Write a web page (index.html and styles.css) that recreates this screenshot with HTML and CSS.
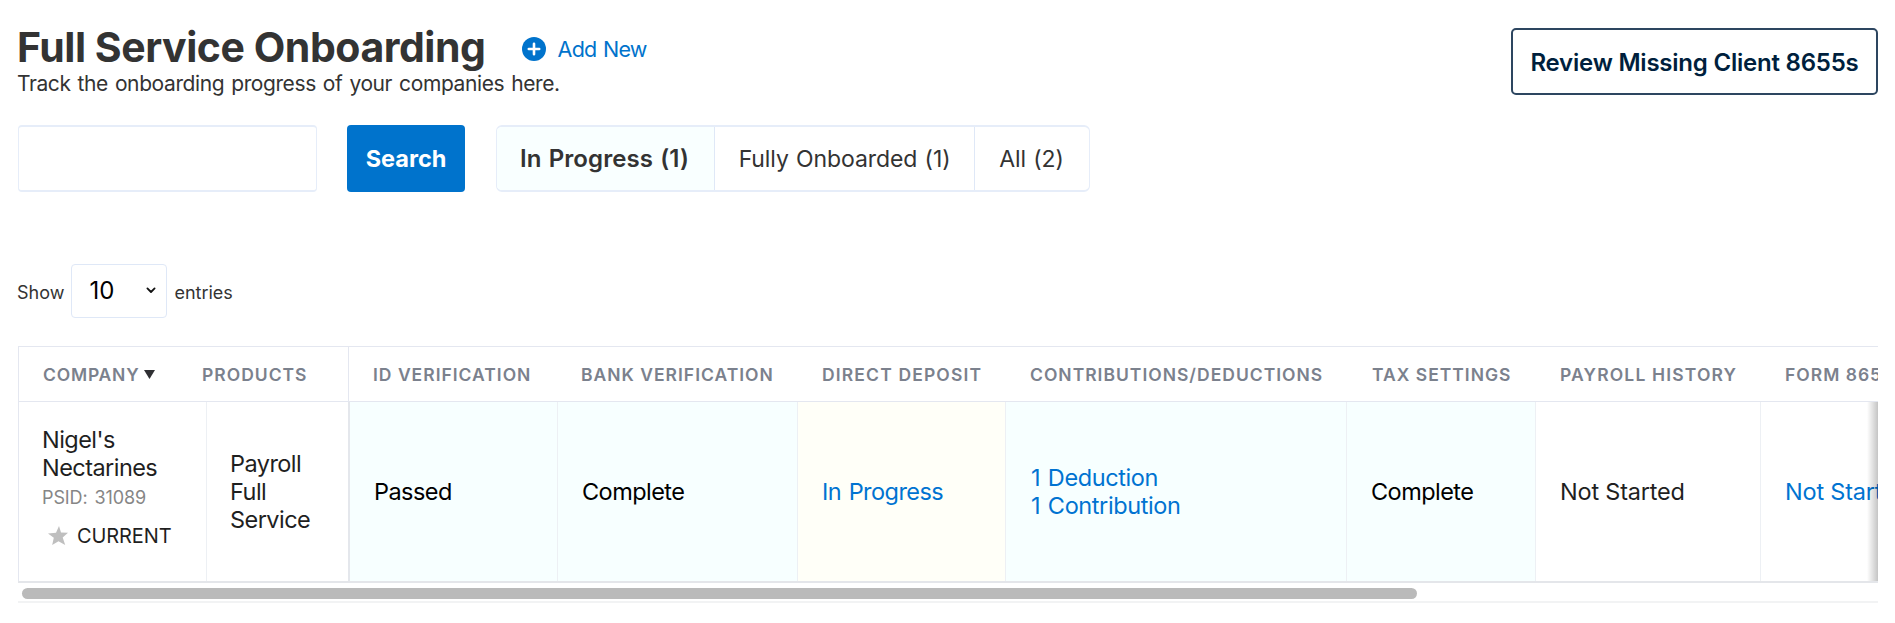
FILE: index.html
```html
<!DOCTYPE html>
<html lang="en">
<head>
<meta charset="utf-8">
<title>Full Service Onboarding</title>
<link rel="stylesheet" href="styles.css">
</head>
<body>
<main class="page">
  <header class="header">
    <div>
      <div class="title-row">
        <h1 class="title">Full Service Onboarding</h1>
        <a class="add-new">
          <svg class="add-icon" viewBox="0 0 24 24"><circle cx="12" cy="12" r="12" fill="#0073cc"/><path d="M12 6.800v10.400M6.800 12h10.400" stroke="#fff" stroke-width="2.600" stroke-linecap="round"/></svg>
          <span>Add New</span>
        </a>
      </div>
      <p class="subtitle">Track the onboarding progress of your companies here.</p>
    </div>
    <button class="review">Review Missing Client 8655s</button>
  </header>

  <div class="controls">
    <input class="search-input" type="text">
    <button class="search-btn">Search</button>
    <div class="tabs">
      <button class="tab tab-active">In Progress (1)</button>
      <button class="tab">Fully Onboarded (1)</button>
      <button class="tab">All (2)</button>
    </div>
  </div>

  <div class="length">
    <span>Show</span>
    <div class="select"><span>10</span><svg class="chevron" viewBox="0 0 10 7"><path d="M1.4 1.4L5 5l3.600-3.600" fill="none" stroke="#111" stroke-width="1.8" stroke-linecap="round" stroke-linejoin="round"/></svg></div>
    <span>entries</span>
  </div>

  <section class="grid">
    <div class="row head">
      <div class="th th-company">Company<svg class="sort" viewBox="0 0 11 9"><path d="M0 0h11L5.500 9z" fill="#2f3033"/></svg></div>
      <div class="th th-products">Products</div>
      <div class="th">ID Verification</div>
      <div class="th">Bank Verification</div>
      <div class="th th-wide">Direct Deposit</div>
      <div class="th">Contributions/Deductions</div>
      <div class="th">Tax Settings</div>
      <div class="th th-wide">Payroll History</div>
      <div class="th">Form 8655</div>
    </div>
    <div class="row body">
      <div class="td company">
        <span class="name">Nigel's<br>Nectarines</span>
        <span class="psid">PSID: 31089</span>
        <span class="current"><svg class="star" viewBox="0 0 20 19"><path d="M11 0l2 6.500 7 .3-5.300 4.600L17.200 19 10.500 15.200 4.200 19l1.600-7.300L0 7.600l8-.8z" fill="#bfbfbf"/></svg>CURRENT</span>
      </div>
      <div class="td products">Payroll<br>Full<br>Service</div>
      <div class="td done">Passed</div>
      <div class="td done">Complete</div>
      <div class="td progress"><a class="link">In Progress</a></div>
      <div class="td done contrib"><a class="link">1 Deduction<br>1 Contribution</a></div>
      <div class="td done">Complete</div>
      <div class="td todo">Not Started</div>
      <div class="td todo last"><a class="link">Not Started</a></div>
    </div>
    <div class="track"><div class="thumb"></div></div>
  </section>
</main>
</body>
</html>
```
FILE: styles.css
```css
* { box-sizing: border-box; }

body {
  margin: 0;
  background: #fff;
  color: #333;
  font-family: Inter, "Liberation Sans", sans-serif;
  font-size: 23px;
  line-height: 28px;
}

button { font: inherit; color: inherit; background: none; border: 0; padding: 0; }

.page { padding: 24px 17px 0 18px; }

.header { display: flex; justify-content: space-between; align-items: flex-start; height: 73px; }
.title-row { display: flex; align-items: center; height: 45px; }
.title { margin: 0 0 0 -1px; font-size: 41px; font-weight: 700; line-height: 46px; letter-spacing: -0.46px; }
.add-new { display: flex; align-items: center; margin: 4px 0 0 36px; gap: 12px; font-size: 21.5px; letter-spacing: -0.7px; word-spacing: 1px; color: #0073cc; }
.add-icon { width: 24px; height: 24px; margin-top: 1px; }
.subtitle { margin: 0 0 0 -1px; font-size: 21px; letter-spacing: -0.4px; word-spacing: 1.5px; line-height: 29px; }

.review {
  width: 367px;
  height: 67px;
  margin-top: 4px;
  padding-top: 2px;
  border: 2px solid #2d4660;
  border-radius: 5px;
  color: #001f3d;
  font-size: 24px;
  font-weight: 600;
  letter-spacing: -0.22px;
  white-space: nowrap;
}

.controls { display: flex; height: 67px; margin-top: 28px; }
.search-input { width: 299px; border: 2px solid #e6edf9; border-width: 2px 1px; border-radius: 4px; padding: 0 16px; }
.search-btn {
  width: 118px;
  margin-left: 30px;
  padding-top: 1px;
  border-radius: 4px;
  background: #0073cc;
  color: #fff;
  font-size: 23.5px;
  font-weight: 700;
}
.tabs { display: flex; width: 594px; margin-left: 31px; border: 2px solid #e6edf9; border-width: 2px 1px; border-radius: 6px; overflow: hidden; }
.tab { padding: 0 0 0 24px; text-align: left; letter-spacing: -0.1px; word-spacing: 1px; border-left: 1px solid #dfe8f7; width: 261px; white-space: nowrap; }
.tab:last-child { width: 115px; }
.tab-active { width: 217px; border-left: 0; font-weight: 600; font-size: 24px; letter-spacing: 0.1px; padding-left: 23px; background: #f9ffff; }

.length { display: flex; align-items: center; height: 54px; margin-top: 72px; font-size: 18px; }
.length > span { padding-top: 4px; margin-left: -1px; }
.select {
  display: flex;
  justify-content: space-between;
  align-items: center;
  width: 96px;
  height: 54px;
  margin: 0 8px 0 7px;
  padding: 0 10px 0 17px;
  border: 1px solid #dfe8f7;
  border-radius: 4px;
  font-size: 24px;
  color: #000;
}
.chevron { width: 10px; height: 7px; margin-bottom: 2px; }

.grid { margin-top: 28px; height: 257px; overflow: hidden; border-top: 1px solid #e4e7f0; }
.row { display: grid; width: 1900px; }
.head {
  grid-template-columns: 160px 171px 208px 241px 208px 342px 188px 225px 157px;
  height: 55px;
  border-bottom: 1px solid #e4e7f0;
}
.th {
  display: flex;
  align-items: center;
  padding: 1px 0 0 24px;
  font-size: 17.5px;
  font-weight: 600;
  letter-spacing: 1px;
  text-transform: uppercase;
  white-space: nowrap;
  color: #7b818d;
}
.th-company { border-left: 1px solid #e4e7f0; letter-spacing: 0.8px; }
.th-products { border-right: 1px solid #e4e7f0; }
.th-wide { letter-spacing: 1.15px; }
.sort { width: 11px; height: 9px; margin-left: 5px; }

.body {
  grid-template-columns: 189px 143px 208px 240px 208px 341px 189px 225px 157px;
  height: 181px;
  border-bottom: 2px solid #e4e6ea;
}
.td {
  display: flex;
  align-items: center;
  padding-left: 24px;
  border-right: 1px solid #edf0f4;
  font-size: 23.5px;
  letter-spacing: -0.55px;
  word-spacing: 1.5px;
  white-space: nowrap;
  color: #1f1f1f;
}
.company { flex-direction: column; align-items: flex-start; padding: 24px 0 0 23px; border-left: 1px solid #e4e7f0; }
.psid { font-size: 18px; line-height: 32px; letter-spacing: -0.1px; word-spacing: 2px; color: #868686; }
.current { display: flex; align-items: center; height: 44px; font-size: 20px; letter-spacing: -0.1px; }
.star { width: 20px; height: 19px; margin: 0 9px 2px 6px; }
.products { padding-left: 23px; border-right: 2px solid #e4e7ec; }
.done { background: #f7ffff; color: #000; }
.progress { background: #fffff8; }
.contrib { padding: 1px 0 0 25px; letter-spacing: -0.4px; }
.todo { letter-spacing: -0.2px; word-spacing: 0; }
.link { color: #0073d1; }

/* edge shadow marks content scrolled past the right side */
.last { position: relative; }
.last::after {
  content: "";
  position: absolute;
  top: 0;
  bottom: 0;
  left: 106px;
  width: 12px;
  background: linear-gradient(to right, rgba(0, 0, 0, 0), rgba(0, 0, 0, 0.25));
}

.track { padding: 5px 4px 3px; height: 20px; border-bottom: 2px solid #f2f3f4; }
.thumb { width: 1395px; height: 11px; border-radius: 6px; background: #bababa; }
```
